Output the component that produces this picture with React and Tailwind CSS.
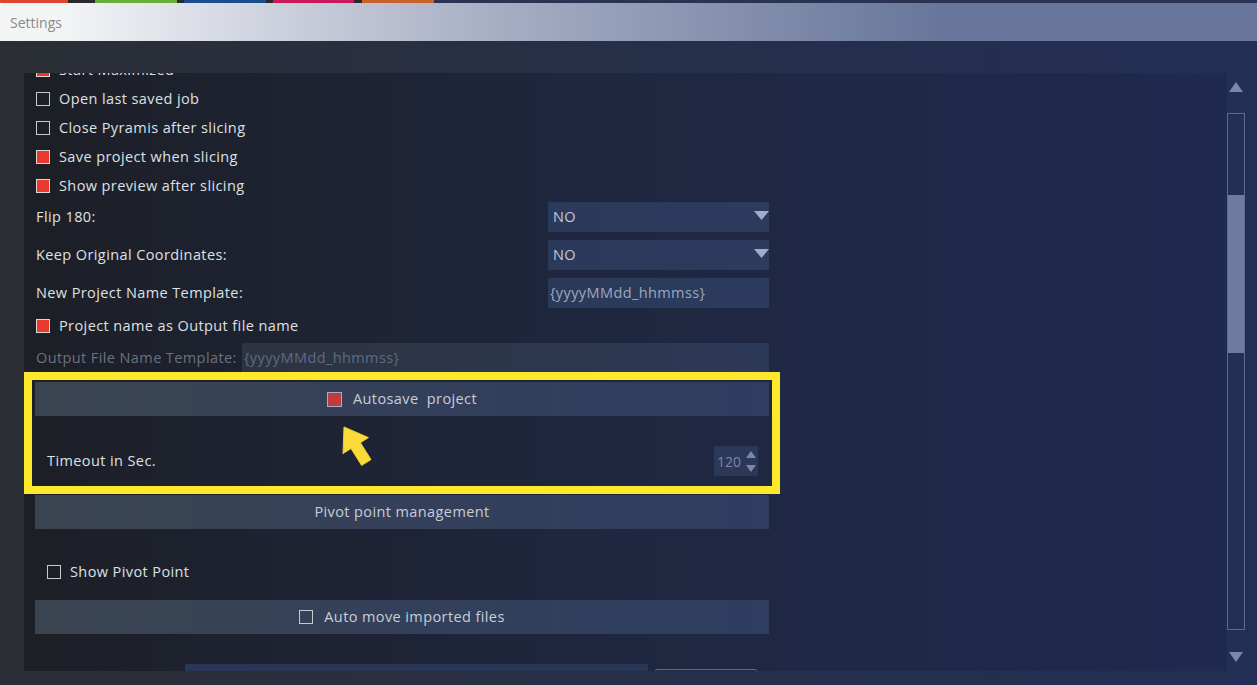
import React from "react";

// small square checkbox used across the settings list
const Check = ({ on }) => (
  <span
    className={
      on
        ? "inline-block h-[14px] w-[14px] shrink-0 border border-[#d9d9d9] bg-[#e8392c]"
        : "inline-block h-[14px] w-[14px] shrink-0 border border-[#c9c9c9] bg-transparent"
    }
  />
);

const CheckRow = ({ on, label }) => (
  <div className="flex h-[29px] items-center gap-[9px] pl-px">
    <Check on={on} />
    <span className="text-[#dde0e5]">{label}</span>
  </div>
);

const Triangle = () => (
  <svg width="15" height="10" viewBox="0 0 15 10" className="shrink-0">
    <polygon points="0,0 15,0 7.5,9" fill="#a3abcb" />
  </svg>
);

const Dropdown = ({ value }) => (
  <div className="flex h-[30px] w-[221px] items-center justify-between bg-linear-to-r from-[#2b395a] to-[#2c3b5e] pl-[5px]">
    <span className="text-[#c3cadb]">{value}</span>
    <div className="mb-[3px]">
      <Triangle />
    </div>
  </div>
);

const LabelRow = ({ label, children }) => (
  <div className="flex items-center justify-between pl-px">
    <span className="text-[#dde0e5]">{label}</span>
    {children}
  </div>
);

const Bar = ({ children }) => (
  <div className="flex h-[34px] items-center justify-center gap-[11px] bg-linear-to-r from-[#3b4551] via-[#34405a] to-[#2e3d60] text-[#c9cdd6]">
    {children}
  </div>
);

const Arrow = () => (
  <svg
    width="38"
    height="46"
    viewBox="0 0 38 46"
    className="pointer-events-none absolute left-[339px] top-[423px]"
  >
    <polygon
      points="5,4 29.4,14.6 21.4,19.7 32,36.6 22.6,42.4 12,25.5 4,30.6"
      fill="#f9dc3a"
      stroke="#f2cf2a"
      strokeWidth="1"
      strokeLinejoin="round"
    />
  </svg>
);

const Scrollbar = () => (
  <div className="flex w-[18px] shrink-0 flex-col items-center bg-[#232f55] pt-[9px]">
    <svg width="14" height="10" viewBox="0 0 14 10">
      <polygon points="7,0 14,10 0,10" fill="#7c87ad" />
    </svg>
    <div className="mt-[21px] flex h-[517px] w-[18px] flex-col border border-[#5d6a91]">
      <div className="h-[81px]" />
      <div className="h-[158px] bg-[#6e7a9f]" />
    </div>
    <svg width="14" height="10" viewBox="0 0 14 10" className="mt-[22px]">
      <polygon points="0,0 14,0 7,10" fill="#7c87ad" />
    </svg>
  </div>
);

export default function App() {
  return (
    <div className="relative h-[685px] w-[1257px] overflow-hidden font-['Open_Sans',sans-serif] text-[14.5px] tracking-[0.4px]">
      {/* taskbar colour strip */}
      <div className="flex h-[3px] bg-[#2a3352]">
        <div className="w-[68px] bg-[#e0452f]" />
        <div className="w-[27px] bg-[#2a2a2c]" />
        <div className="w-[82px] bg-[#6aae3a]" />
        <div className="w-[7px] bg-[#2a2a2c]" />
        <div className="w-[82px] bg-[#1b4c8f]" />
        <div className="w-[7px] bg-[#2a2a2c]" />
        <div className="w-[81px] bg-[#c8195a]" />
        <div className="w-[8px] bg-[#2a2a2c]" />
        <div className="w-[72px] bg-[#c8622a]" />
      </div>

      {/* title bar */}
      <div className="flex h-[38px] items-center rounded-tl-[6px] bg-linear-to-r from-[#f3f4f6] from-5% via-[#a6adc3] via-40% to-[#67769a] to-75% pl-[10px]">
        <span className="text-[14px] tracking-normal text-[#8a8a8a]">Settings</span>
      </div>

      {/* body */}
      <div className="h-[644px] bg-linear-to-r from-[#2b2e34] via-[#262f48] to-[#222e55] pl-[24px] pr-[12px] pt-[32px]">
        <div className="flex h-[598px]">
          <div className="relative flex-1 overflow-hidden bg-linear-to-r from-[#1d1f26] via-[#1f2740] to-[#1f2a4f]">
            <div className="w-[745px] pl-[11px]">
              <div className="w-[734px]">
                <div className="mt-[-18px]">
                  <CheckRow on label="Start Maximized" />
                </div>
                <CheckRow label="Open last saved job" />
                <CheckRow label="Close Pyramis after slicing" />
                <CheckRow on label="Save project when slicing" />
                <CheckRow on label="Show preview after slicing" />

                <div className="mt-[2px] flex flex-col gap-[8px]">
                  <LabelRow label="Flip 180:">
                    <Dropdown value="NO" />
                  </LabelRow>
                  <LabelRow label="Keep Original Coordinates:">
                    <Dropdown value="NO" />
                  </LabelRow>
                  <LabelRow label="New Project Name Template:">
                    <div className="flex h-[30px] w-[221px] items-center bg-linear-to-r from-[#2b395a] to-[#2c3b5e] pl-[2px] text-[#9ba7c0]">
                      {"{yyyyMMdd_hhmmss}"}
                    </div>
                  </LabelRow>
                </div>

                <div className="flex h-[35px] items-center gap-[9px] pl-px">
                  <Check on />
                  <span className="text-[#dde0e5]">Project name as Output file name</span>
                </div>

                <div className="flex h-[29px] items-center justify-between pl-px">
                  <span className="text-[#6c717e]">Output File Name Template:</span>
                  <div className="flex h-[29px] w-[527px] items-center bg-linear-to-r from-[#2d333f] to-[#2c3958] pl-[2px] text-[#5f6a84]">
                    {"{yyyyMMdd_hhmmss}"}
                  </div>
                </div>

                {/* highlighted autosave block */}
                <div className="ml-[-11px] w-[756px] border-[8px] border-[#fde82c] px-[3px] pt-[2px]">
                  <Bar>
                    <span className="inline-block h-[15px] w-[15px] border border-[#a9aebb] bg-[#c13a3c]" />
                    <span className="whitespace-pre">Autosave  project</span>
                  </Bar>
                  <div className="flex items-center justify-between pb-[10px] pl-[12px] pr-[11px] pt-[30px]">
                    <span className="text-[#dde0e5]">Timeout in Sec.</span>
                    <div className="flex h-[30px] w-[44px] items-center justify-between bg-[#2b3858] pl-[3px] pr-[2px]">
                      <span className="text-[14px] tracking-normal text-[#7c87a8]">120</span>
                      <div className="flex flex-col gap-[7px]">
                        <svg width="10" height="7" viewBox="0 0 10 7">
                          <polygon points="5,0 10,7 0,7" fill="#7c87a8" />
                        </svg>
                        <svg width="10" height="7" viewBox="0 0 10 7">
                          <polygon points="0,0 10,0 5,7" fill="#7c87a8" />
                        </svg>
                      </div>
                    </div>
                  </div>
                </div>

                <div className="mt-px">
                  <Bar>Pivot point management</Bar>
                </div>

                <div className="mt-[28px] flex h-[29px] items-center gap-[9px] pl-[12px]">
                  <Check />
                  <span className="text-[#dde0e5]">Show Pivot Point</span>
                </div>

                <div className="mt-[14px]">
                  <Bar>
                    <Check />
                    <span>Auto move imported files</span>
                  </Bar>
                </div>

                <div className="mt-[30px] flex items-start gap-[7px] pl-[150px]">
                  <div className="h-[30px] w-[463px] bg-[#2a3656]" />
                  <div className="mt-[5px] h-[30px] w-[102px] rounded-[2px] border border-[#5e6c92]" />
                </div>
              </div>
            </div>
          </div>
          <Scrollbar />
        </div>
      </div>

      <Arrow />
    </div>
  );
}
